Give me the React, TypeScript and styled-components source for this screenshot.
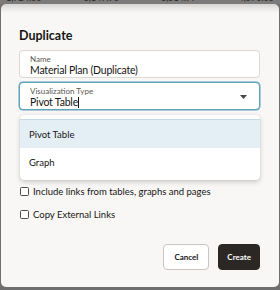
import React from "react";
import styled, { createGlobalStyle } from "styled-components";

const GlobalStyle = createGlobalStyle`
  html, body { margin: 0; padding: 0; }
  body {
    background: #707070;
    font-family: Lato, "Noto Sans", Arial, sans-serif;
    color: #161513;
  }
`;

const Page = styled.div`
  position: relative;
  width: 280px;
  height: 290px;
  overflow: hidden;
  background: #6f6f6f;
`;

const BackStrip = styled.div`
  height: 4px;
  display: flex;
  gap: 42px;
  padding-left: 6px;
  overflow: hidden;
  background: #7b7b7b;
`;

const BackCell = styled.span`
  font-size: 9px;
  line-height: 9px;
  margin-top: -7px;
  color: #2a2a2a;
  white-space: nowrap;
`;

const Dialog = styled.div`
  position: relative;
  margin: 0 1px;
  height: 283px;
  box-sizing: border-box;
  border-radius: 5px;
  background: linear-gradient(#d6d5d3 0px, #eceae8 5px, #f8f7f5 9px, #f8f7f5 100%);
  padding: 23px 19px 17px 18px;
  display: flex;
  flex-direction: column;
`;

const Title = styled.h1`
  margin: 0 0 1px 0;
  font-size: 12.5px;
  line-height: 18px;
  font-weight: 700;
  color: #161513;
`;

const Field = styled.div<{ $focused?: boolean }>`
  position: relative;
  height: 28px;
  box-sizing: border-box;
  margin-top: 4px;
  border: 1px solid ${(p) => (p.$focused ? "#5fa2bb" : "#dcd9d5")};
  box-shadow: ${(p) => (p.$focused ? "0 0 0 0.5px #5fa2bb" : "none")};
  border-radius: 4px;
  background: #fff;
  padding: 4px 10px 0 10px;
  display: flex;
  flex-direction: column;
`;

const Label = styled.span`
  font-size: 8px;
  line-height: 9px;
  color: #5b5752;
`;

const Value = styled.span`
  font-size: 10.5px;
  letter-spacing: -0.2px;
  line-height: 13px;
  color: #161513;
  display: flex;
  align-items: center;
`;

const Caret = styled.span`
  display: inline-block;
  width: 1px;
  height: 11px;
  background: #161513;
`;

const Arrow = styled.svg`
  position: absolute;
  right: 12px;
  top: 12px;
`;

const Options = styled.div`
  margin-top: 24px;
  display: flex;
  flex-direction: column;
`;

const CheckRow = styled.label`
  height: 23px;
  display: flex;
  align-items: center;
  gap: 4px;
  font-size: 9.5px;
  color: #161513;
`;

const Box = styled.span`
  width: 7px;
  height: 7px;
  border: 1px solid #4f4b47;
  border-radius: 1.5px;
  background: #fff;
  flex: none;
  margin-left: 1px;
`;

const Footer = styled.div`
  margin-top: auto;
  display: flex;
  justify-content: flex-end;
  gap: 9px;
`;

const Button = styled.button<{ $primary?: boolean }>`
  height: 26px;
  box-sizing: border-box;
  padding: 0 ${(p) => (p.$primary ? "8px" : "10px")};
  border-radius: 4px;
  font-family: Lato, "Noto Sans", Arial, sans-serif;
  font-size: 8px;
  font-weight: 700;
  border: 1px solid ${(p) => (p.$primary ? "#2b2724" : "#c9c6c2")};
  background: ${(p) => (p.$primary ? "#2b2724" : "#fff")};
  color: ${(p) => (p.$primary ? "#fff" : "#161513")};
`;

const Menu = styled.div`
  position: absolute;
  left: 19px;
  top: 111px;
  width: 240px;
  padding: 4px 0 0 0;
  height: 65px;
  box-sizing: border-box;
  background: #fff;
  border-radius: 4px;
  box-shadow: 0 2px 5px rgba(0, 0, 0, 0.18), 0 0 1px rgba(0, 0, 0, 0.2);
  display: flex;
  flex-direction: column;
`;

const MenuItem = styled.div<{ $active?: boolean }>`
  height: 29px;
  display: flex;
  align-items: center;
  padding-left: 9px;
  font-size: 9.5px;
  color: #161513;
  background: ${(p) => (p.$active ? "#e3eff5" : "transparent")};
  border-top: ${(p) => (p.$active ? "1px solid #c2dbe6" : "none")};
  box-sizing: border-box;
`;

export default function App() {
  return (
    <>
      <GlobalStyle />
      <Page>
        <BackStrip>
          <BackCell>1,724.06</BackCell>
          <BackCell>3,147.96</BackCell>
          <BackCell>3,514.77</BackCell>
          <BackCell>4,570.05</BackCell>
          <BackCell>4,570.05</BackCell>
        </BackStrip>
        <Dialog>
          <Title>Duplicate</Title>
          <Field>
            <Label>Name</Label>
            <Value>Material Plan (Duplicate)</Value>
          </Field>
          <Field $focused>
            <Label>Visualization Type</Label>
            <Value>
              Pivot Table<Caret />
            </Value>
            <Arrow width="7" height="4" viewBox="0 0 7 4">
              <path d="M0 0 H7 L3.5 4 Z" fill="#4a4642" />
            </Arrow>
          </Field>
          <Options>
            <CheckRow>
              <Box />
              Copy Layouts
            </CheckRow>
            <CheckRow>
              <Box />
              Copy Saved Searches
            </CheckRow>
            <CheckRow>
              <Box />
              Include links from tables, graphs and pages
            </CheckRow>
            <CheckRow>
              <Box />
              Copy External Links
            </CheckRow>
          </Options>
          <Footer>
            <Button>Cancel</Button>
            <Button $primary>Create</Button>
          </Footer>
          <Menu>
            <MenuItem $active>Pivot Table</MenuItem>
            <MenuItem>Graph</MenuItem>
          </Menu>
        </Dialog>
      </Page>
    </>
  );
}
